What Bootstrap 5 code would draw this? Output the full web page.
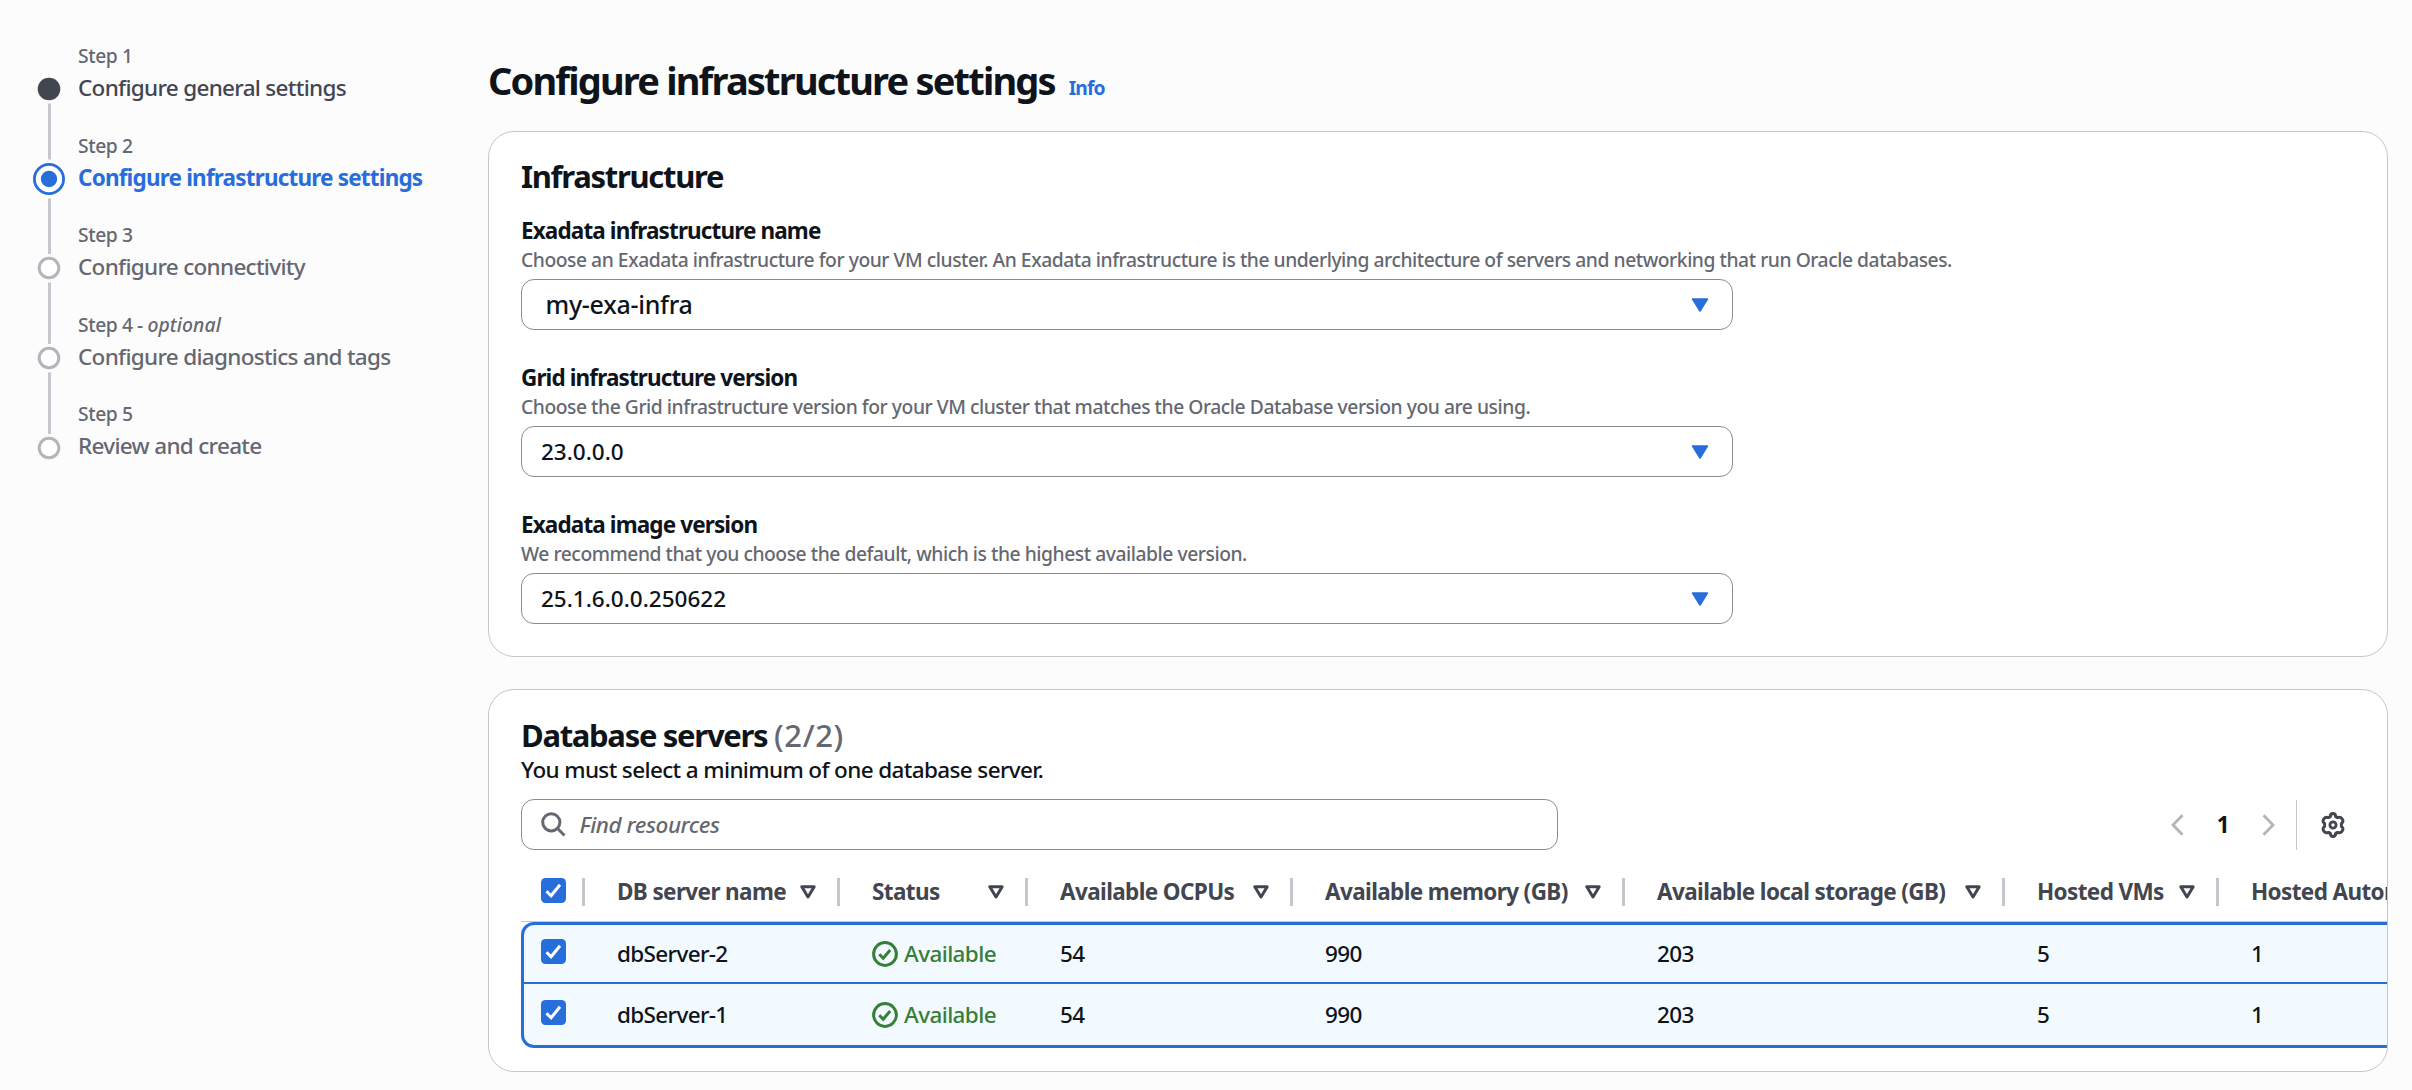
<!DOCTYPE html>
<html lang="en">
<head>
<meta charset="utf-8">
<meta name="viewport" content="width=device-width, initial-scale=1">
<title>Configure infrastructure settings</title>
<link href="https://cdn.jsdelivr.net/npm/bootstrap@5.3.0/dist/css/bootstrap.min.css" rel="stylesheet">
<style>
  :root { --ink:#0f141a; --head:#424650; --muted:#656871; --line:#c6c6cd; --field:#8c8c94; --accent:#276edb; --ok:#377f38; }
  body { background:#fcfcfd; color:var(--ink); font-family:"Noto Sans","Open Sans",sans-serif; font-size:22.5px; font-weight:500; letter-spacing:-.029em; line-height:32px; overflow:hidden; height:1090px; }
  .step-nav { width:488px; padding:41px 0 0 33px; gap:13px; }
  .step-nav li { height:89.5px; }
  .step-no { font-size:19.3px; line-height:29px; letter-spacing:-.022em; color:var(--muted); }
  .step-no em { letter-spacing:.004em; }
  .step-name { line-height:35px; color:var(--muted); white-space:nowrap; letter-spacing:-.031em; }
  .step-done { color:var(--head); }
  .step-current { color:var(--accent); font-weight:700; letter-spacing:-.0362em; }
  .main-col { width:1900px; padding-top:56px; }
  .page-title { font-size:38px; line-height:48px; font-weight:700; letter-spacing:-.0480em; margin-bottom:27px; }
  .info-link { font-size:19.3px; font-weight:700; letter-spacing:-.046em; margin-left:14px; color:var(--accent); text-decoration:none; }
  .panel { border:1px solid var(--line); border-radius:26px; background:#fff; padding:0 32px; overflow:hidden; }
  .panel-infra { height:526px; }
  .panel-servers { height:383px; margin-top:32px; }
  .panel-title { font-size:31px; font-weight:700; letter-spacing:-.042em; margin:0; }
  .panel-infra .panel-title { line-height:40px; padding-top:24px; margin-bottom:19px; }
  .panel-servers .panel-title { line-height:36px; padding-top:27px; }
  .count { font-weight:500; color:var(--muted); letter-spacing:.02em; }
  .field-label { font-weight:700; letter-spacing:-.0390em; line-height:32px; margin:0; }
  .hint { font-size:19.3px; line-height:26px; letter-spacing:-.0239em; color:var(--muted); margin-bottom:6px; font-weight:500; white-space:nowrap; }
  .fields { gap:32px; }
  .picker { width:1212px; height:51px; border:1px solid var(--field); border-radius:13px; padding:1px 23px 0 19px; background:#fff; letter-spacing:0; font-weight:500; }
  .picker-lg { font-size:25px; letter-spacing:-.011em; padding-left:23.5px; line-height:30px; }
  .picker-lg span { margin-bottom:3px; }
  .search { width:1037px; height:51px; border:1px solid var(--field); border-radius:13px; padding-left:19px; gap:13.5px; color:var(--muted); }
  .search em { font-weight:500; letter-spacing:-.02em; }
  .lede { margin:1px 0 13px; letter-spacing:-.028em; }
  .pager { padding-right:9px; }
  .pager-rule { width:1px; height:50px; background:var(--line); margin:0 23px 0 21px; }
  .srv-scroll { margin-right:-32px; overflow:hidden; }
  .srv-table { width:1960px; table-layout:fixed; border-collapse:separate; border-spacing:0; color:var(--ink); --bs-table-bg:transparent; --bs-table-color:var(--ink); margin:0; }
  .srv-table > thead > tr > th { height:72px; padding:13px 0 0 32px; border:0; border-bottom:1px solid var(--line); vertical-align:middle; color:var(--head); font-weight:700; letter-spacing:-.0275em; white-space:nowrap; }
  .srv-table > tbody > tr > td { padding:0 0 0 32px; border:0; background:#f2faff; vertical-align:middle; }
  .srv-table > tbody > tr:first-child > td { height:60px; border-top:3px solid var(--accent); }
  .srv-table > tbody > tr:last-child > td { height:66px; border-top:2px solid var(--accent); border-bottom:3px solid var(--accent); }
  .srv-table > tbody > tr > td:first-child { border-left:3px solid var(--accent); padding-left:17px; }
  .srv-table > thead > tr > th:first-child { padding-left:20px; }
  .srv-table > tbody > tr:first-child > td:first-child { border-top-left-radius:13px; }
  .srv-table > tbody > tr:last-child > td:first-child { border-bottom-left-radius:13px; }
  .col-sep { width:3px; height:28px; background:var(--line); margin-left:21px; flex:none; }
  .tick { margin-bottom:4px; }
  .tick + .col-sep { margin-left:0; }
  .avail { color:var(--ok); gap:6px; letter-spacing:-.0268em; }
  svg { display:block; flex:none; }
</style>
</head>
<body>
<svg width="0" height="0" class="position-absolute" aria-hidden="true">
  <symbol id="i-check" viewBox="0 0 25 25"><rect width="25" height="25" rx="4.5" fill="#276edb"/><path d="M5.5 13.2l4.6 4.6L19 6.8" fill="none" stroke="#fff" stroke-width="3"/></symbol>
  <symbol id="i-sort" viewBox="0 0 16 14"><path d="M1.8 1.7h12.4L8 12z" fill="none" stroke="#424650" stroke-width="3" stroke-linejoin="round"/></symbol>
  <symbol id="i-caret" viewBox="0 0 18 14"><path d="M1.6 1h14.8L9 13z" fill="#276edb" stroke="#276edb" stroke-width="1.6" stroke-linejoin="round"/></symbol>
  <symbol id="i-ok" viewBox="0 0 26 26"><circle cx="13" cy="13" r="11.4" fill="none" stroke="#377f38" stroke-width="3"/><path d="M7.3 13.3l3.9 3.9 7-8.2" fill="none" stroke="#377f38" stroke-width="3"/></symbol>
</svg>

<div class="d-flex">
  <nav class="step-nav d-flex flex-shrink-0">
    <svg width="32" height="430" viewBox="0 0 32 430">
      <g fill="#c6c6cd"><path d="M15 62.5h3v56h-3zM15 157.500h3v55.500h-3zM15 241.500h3v61.500h-3zM15 331.500h3v61.500h-3z"/></g>
      <circle cx="16" cy="48" r="11.3" fill="#424650"/>
      <circle cx="16" cy="138" r="14.6" fill="#fff" stroke="#276edb" stroke-width="2.8"/>
      <circle cx="16" cy="138" r="8.2" fill="#276edb"/>
      <g fill="#fff" stroke="#b4b4bb" stroke-width="3"><circle cx="16" cy="227" r="9.800"/><circle cx="16" cy="317" r="9.800"/><circle cx="16" cy="407" r="9.800"/></g>
    </svg>
    <ol class="list-unstyled mb-0">
      <li><div class="step-no">Step 1</div><div class="step-name step-done">Configure general settings</div></li>
      <li><div class="step-no">Step 2</div><div class="step-name step-current">Configure infrastructure settings</div></li>
      <li><div class="step-no">Step 3</div><div class="step-name">Configure connectivity</div></li>
      <li><div class="step-no">Step 4 - <em>optional</em></div><div class="step-name">Configure diagnostics and tags</div></li>
      <li><div class="step-no">Step 5</div><div class="step-name">Review and create</div></li>
    </ol>
  </nav>

  <main class="main-col flex-shrink-0">
    <div class="d-flex align-items-baseline">
      <h1 class="page-title">Configure infrastructure settings</h1>
      <a class="info-link" href="#">Info</a>
    </div>

    <section class="panel panel-infra">
      <h2 class="panel-title">Infrastructure</h2>
      <div class="fields d-flex flex-column">
        <div>
          <p class="field-label">Exadata infrastructure name</p>
          <p class="hint">Choose an Exadata infrastructure for your VM cluster. An Exadata infrastructure is the underlying architecture of servers and networking that run Oracle databases.</p>
          <div class="picker picker-lg d-flex align-items-center justify-content-between"><span>my-exa-infra</span><svg width="18" height="14"><use href="#i-caret"/></svg></div>
        </div>
        <div>
          <p class="field-label">Grid infrastructure version</p>
          <p class="hint">Choose the Grid infrastructure version for your VM cluster that matches the Oracle Database version you are using.</p>
          <div class="picker d-flex align-items-center justify-content-between"><span>23.0.0.0</span><svg width="18" height="14"><use href="#i-caret"/></svg></div>
        </div>
        <div>
          <p class="field-label">Exadata image version</p>
          <p class="hint">We recommend that you choose the default, which is the highest available version.</p>
          <div class="picker d-flex align-items-center justify-content-between"><span>25.1.6.0.0.250622</span><svg width="18" height="14"><use href="#i-caret"/></svg></div>
        </div>
      </div>
    </section>

    <section class="panel panel-servers">
      <h2 class="panel-title">Database servers <span class="count">(2/2)</span></h2>
      <p class="lede">You must select a minimum of one database server.</p>
      <div class="d-flex justify-content-between align-items-center">
        <div class="search d-flex align-items-center">
          <svg width="25" height="25" viewBox="0 0 25 25" fill="none" stroke="#656871" stroke-width="3"><circle cx="10.300" cy="10.300" r="8.600"/><path d="M16.300 16.300l7.200 7.200"/></svg>
          <em>Find resources</em>
        </div>
        <div class="pager d-flex align-items-center">
          <svg width="13" height="22" viewBox="0 0 13 22" fill="none" stroke="#b4b4bb" stroke-width="2.800"><path d="M11.500 1.200L2 11l9.500 9.800"/></svg>
          <span class="fw-bold" style="margin:0 33px 0 33px">1</span>
          <svg width="13" height="22" viewBox="0 0 13 22" fill="none" stroke="#b4b4bb" stroke-width="2.800"><path d="M1.500 1.200L11 11l-9.500 9.800"/></svg>
          <div class="pager-rule"></div>
          <svg width="26" height="26" viewBox="0 0 26 26" fill="none" stroke="#424650" stroke-width="3" stroke-linejoin="round"><path d="M10.300 4.600Q10.500 1.600 13 1.600T15.700 4.600L17.500 5.600Q20.300 4.400 22 6.600Q24.200 9.600 21.400 11.400V14.600Q24.200 16.400 22 19.400Q20.300 21.600 17.500 20.400L15.700 21.400Q15.500 24.400 13 24.400T10.300 21.400L8.500 20.400Q5.700 21.600 4 19.400Q1.800 16.400 4.600 14.600V11.400Q1.800 9.600 4 6.600Q5.700 4.400 8.500 5.600z"/><circle cx="13" cy="13" r="3.100" stroke-width="2.800"/></svg>
        </div>
      </div>

      <div class="srv-scroll">
        <table class="table srv-table">
          <colgroup><col style="width:64px"><col style="width:255px"><col style="width:188px"><col style="width:265px"><col style="width:332px"><col style="width:380px"><col style="width:214px"><col></colgroup>
          <thead>
            <tr>
              <th><div class="d-flex align-items-center justify-content-between"><svg class="tick" width="25" height="25"><use href="#i-check"/></svg><span class="col-sep"></span></div></th>
              <th><div class="d-flex align-items-center"><span class="me-auto">DB server name</span><svg width="16" height="14"><use href="#i-sort"/></svg><span class="col-sep"></span></div></th>
              <th><div class="d-flex align-items-center"><span class="me-auto">Status</span><svg width="16" height="14"><use href="#i-sort"/></svg><span class="col-sep"></span></div></th>
              <th><div class="d-flex align-items-center"><span class="me-auto">Available OCPUs</span><svg width="16" height="14"><use href="#i-sort"/></svg><span class="col-sep"></span></div></th>
              <th><div class="d-flex align-items-center"><span class="me-auto">Available memory (GB)</span><svg width="16" height="14"><use href="#i-sort"/></svg><span class="col-sep"></span></div></th>
              <th><div class="d-flex align-items-center"><span class="me-auto">Available local storage (GB)</span><svg width="16" height="14"><use href="#i-sort"/></svg><span class="col-sep"></span></div></th>
              <th><div class="d-flex align-items-center"><span class="me-auto">Hosted VMs</span><svg width="16" height="14"><use href="#i-sort"/></svg><span class="col-sep"></span></div></th>
              <th>Hosted Autonomous VMs</th>
            </tr>
          </thead>
          <tbody>
            <tr>
              <td><svg class="tick" width="25" height="25"><use href="#i-check"/></svg></td>
              <td>dbServer-2</td>
              <td><div class="avail d-flex align-items-center"><svg width="26" height="26"><use href="#i-ok"/></svg>Available</div></td>
              <td>54</td><td>990</td><td>203</td><td>5</td><td>1</td>
            </tr>
            <tr>
              <td><svg class="tick" width="25" height="25"><use href="#i-check"/></svg></td>
              <td>dbServer-1</td>
              <td><div class="avail d-flex align-items-center"><svg width="26" height="26"><use href="#i-ok"/></svg>Available</div></td>
              <td>54</td><td>990</td><td>203</td><td>5</td><td>1</td>
            </tr>
          </tbody>
        </table>
      </div>
    </section>
  </main>
</div>
<script src="https://cdn.jsdelivr.net/npm/bootstrap@5.3.0/dist/js/bootstrap.bundle.min.js"></script>
</body>
</html>
